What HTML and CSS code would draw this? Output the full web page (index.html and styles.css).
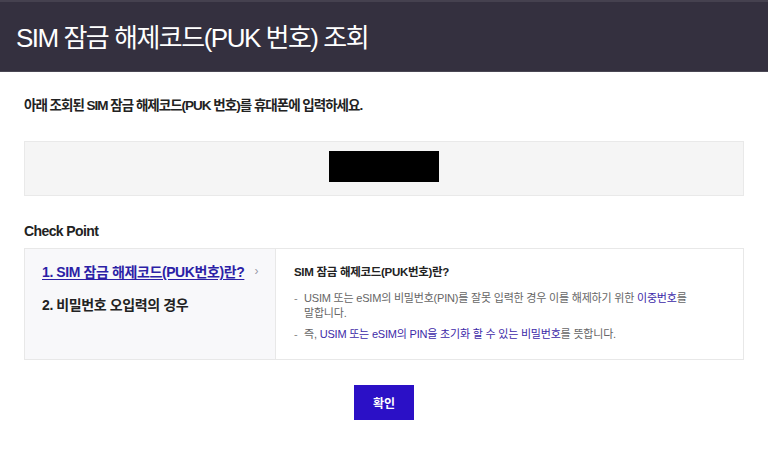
FILE: index.html
```html
<!DOCTYPE html>
<html lang="ko">
<head>
<meta charset="utf-8">
<title>SIM 잠금 해제코드(PUK 번호) 조회</title>
<link rel="stylesheet" href="styles.css">
</head>
<body>
<header class="top">
  <h1 class="title">SIM 잠금 해제코드(PUK 번호) 조회</h1>
</header>
<main class="content">
  <p class="lead">아래 조회된 SIM 잠금 해제코드(PUK 번호)를 휴대폰에 입력하세요.</p>
  <div class="code-box"><span class="code-mask"></span></div>
  <h2 class="section-title">Check Point</h2>
  <div class="check">
    <ul class="check-nav">
      <li><a class="nav-link active" href="#">1. SIM 잠금 해제코드(PUK번호)란?</a><span class="chev">›</span></li>
      <li><a class="nav-link" href="#">2. 비밀번호 오입력의 경우</a></li>
    </ul>
    <div class="check-body">
      <h3 class="body-title">SIM 잠금 해제코드(PUK번호)란?</h3>
      <ul class="dash-list">
        <li><span>USIM 또는 eSIM의 비밀번호(PIN)를 잘못 입력한 경우 이를 해제하기 위한 </span><em class="hl">이중번호</em><span>를</span><br><span>말합니다.</span></li>
        <li><span>즉, </span><em class="hl">USIM 또는 eSIM의 PIN을 초기화 할 수 있는 비밀번호</em><span>를 뜻합니다.</span></li>
      </ul>
    </div>
  </div>
  <div class="actions"><button class="btn-ok" type="button">확인</button></div>
</main>
</body>
</html>
```
FILE: styles.css
```css
* { box-sizing: border-box; }
html, body { margin: 0; padding: 0; }
body {
  background: #fff;
  font-family: "Liberation Sans", "Noto Sans CJK KR", sans-serif;
  color: #222;
}
.top {
  height: 72px;
  background: #34303f;
  border-top: 2px solid #45414f;
  border-bottom: 1px solid #4a4754;
  display: flex;
  align-items: center;
  padding: 0 16px 3px;
}
.title {
  margin: 0;
  color: #fff;
  font-size: 26px;
  font-weight: 400;
  letter-spacing: -1.5px;
}
.content { padding: 0 24px; }
.lead {
  margin: 25px 0 0;
  font-size: 13.5px;
  font-weight: 700;
  letter-spacing: -1px;
  line-height: 18px;
  color: #222;
}
.code-box {
  margin-top: 26px;
  height: 55px;
  background: #f5f5f5;
  border: 1px solid #e9e9e9;
  display: flex;
  justify-content: center;
  padding-top: 9px;
}
.code-mask {
  display: block;
  width: 110px;
  height: 31px;
  background: #000;
}
.section-title {
  margin: 26px 0 0;
  font-size: 14px;
  font-weight: 700;
  letter-spacing: -0.6px;
  line-height: 18px;
  color: #222;
}
.check {
  margin-top: 8px;
  display: flex;
  border: 1px solid #e8e8e8;
  height: 112px;
}
.check-nav {
  list-style: none;
  margin: 0;
  padding: 13px 0 0 17px;
  width: 251px;
  background: #f8f8fa;
  border-right: 1px solid #e8e8e8;
}
.check-nav li {
  display: flex;
  align-items: center;
  height: 18px;
  margin-bottom: 15px;
}
.nav-link {
  font-size: 14px;
  font-weight: 700;
  letter-spacing: -0.4px;
  color: #222;
  text-decoration: none;
}
.nav-link.active {
  color: #2c1fa6;
  text-decoration: underline;
  text-underline-offset: 2px;
}
.chev {
  margin-left: 10px;
  color: #9a9aa8;
  font-size: 12px;
}
.check-body {
  flex: 1;
  padding: 16px 40px 0 18px;
}
.body-title {
  margin: 0;
  font-size: 11.5px;
  font-weight: 700;
  letter-spacing: -0.3px;
  color: #222;
  line-height: 15px;
}
.dash-list {
  list-style: none;
  margin: 11px 0 0;
  padding: 0;
}
.dash-list li {
  position: relative;
  padding-left: 10px;
  font-size: 11px;
  line-height: 15px;
  color: #666;
  letter-spacing: -0.2px;
  margin-bottom: 6px;
}
.dash-list li::before {
  content: "-";
  position: absolute;
  left: 0;
  top: 0;
  color: #888;
}
.hl {
  font-style: normal;
  color: #3d2aa8;
}
.actions {
  display: flex;
  justify-content: center;
  margin-top: 25px;
}
.btn-ok {
  width: 60px;
  height: 35px;
  border: 0;
  background: #2b10c6;
  color: #fff;
  font-family: inherit;
  font-size: 12px;
  font-weight: 700;
  cursor: pointer;
}
```
